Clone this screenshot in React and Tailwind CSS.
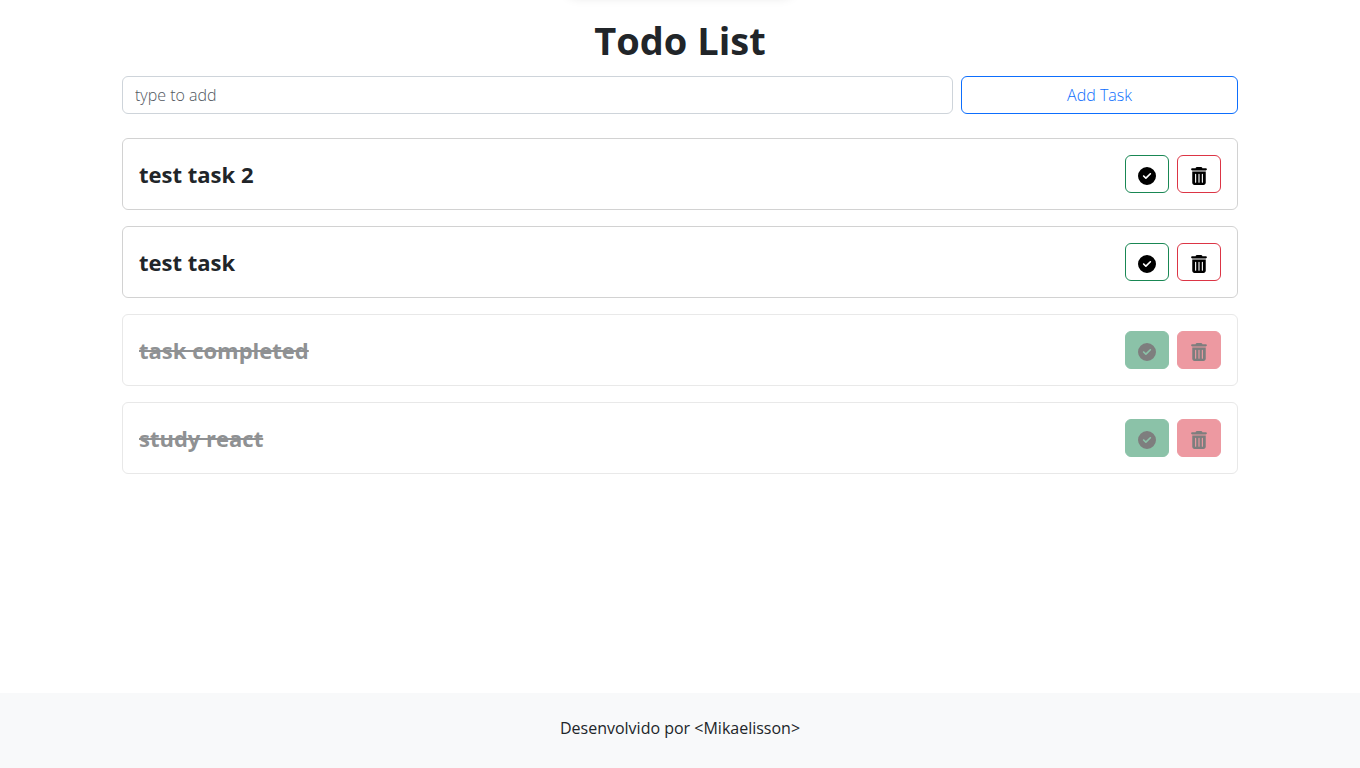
import { useState } from "react";
import { FaCircleCheck, FaTrashCan } from "react-icons/fa6";

const initialTasks = [
  { id: 4, title: "test task 2", done: false },
  { id: 3, title: "test task", done: false },
  { id: 2, title: "task completed", done: true },
  { id: 1, title: "study react", done: true },
];

function TaskCard({ task, onComplete, onDelete }) {
  const base =
    "flex h-[38px] items-center justify-center rounded-md border px-3 pt-1 text-lg text-black";
  return (
    <li
      className={`flex items-center justify-between rounded-md border border-black/[0.175] p-4 ${
        task.done ? "opacity-50" : ""
      }`}
    >
      <h2
        className={`text-[22px]/7 font-bold text-[#212529] ${
          task.done ? "line-through" : ""
        }`}
      >
        {task.title}
      </h2>
      <div className="flex gap-2">
        <button
          type="button"
          aria-label="Complete task"
          disabled={task.done}
          onClick={() => onComplete(task.id)}
          className={`${base} border-[#198754] ${task.done ? "bg-[#198754]" : ""}`}
        >
          <FaCircleCheck />
        </button>
        <button
          type="button"
          aria-label="Delete task"
          disabled={task.done}
          onClick={() => onDelete(task.id)}
          className={`${base} border-[#dc3545] ${task.done ? "bg-[#dc3545]" : ""}`}
        >
          <FaTrashCan />
        </button>
      </div>
    </li>
  );
}

export default function App() {
  const [tasks, setTasks] = useState(initialTasks);
  const [text, setText] = useState("");

  const addTask = (event) => {
    event.preventDefault();
    if (!text.trim()) return;
    setTasks([{ id: Date.now(), title: text.trim(), done: false }, ...tasks]);
    setText("");
  };
  const completeTask = (id) =>
    setTasks(tasks.map((t) => (t.id === id ? { ...t, done: true } : t)));
  const deleteTask = (id) => setTasks(tasks.filter((t) => t.id !== id));

  return (
    <div className="relative flex min-h-screen flex-col overflow-x-hidden bg-white font-['Segoe_UI','Open_Sans',sans-serif] text-base text-[#212529]">
      <div className="absolute inset-x-0 top-0 flex h-4 justify-center overflow-hidden">
        <div className="-mt-12 h-10 w-56 rounded-lg shadow-[0_4px_12px_rgba(0,0,0,0.15)]" />
      </div>
      <main className="mx-auto w-full max-w-[1140px] grow px-3 pt-4">
        <h1 className="text-center text-[38px]/[48px] font-bold">Todo List</h1>
        <form
          onSubmit={addTask}
          className="mt-3 grid grid-cols-[3fr_1fr] gap-2"
        >
          <input
            type="text"
            aria-label="New task"
            placeholder="type to add"
            value={text}
            onChange={(event) => setText(event.target.value)}
            className="h-[38px] min-w-0 rounded-md border border-[#ced4da] px-3 font-light placeholder:text-[#50575e]"
          />
          <button
            type="submit"
            className="h-[38px] rounded-md border border-[#0d6efd] font-light text-[#0d6efd]"
          >
            Add Task
          </button>
        </form>
        <ul className="mt-6 flex flex-col gap-4">
          {tasks.map((task) => (
            <TaskCard
              key={task.id}
              task={task}
              onComplete={completeTask}
              onDelete={deleteTask}
            />
          ))}
        </ul>
      </main>
      <footer className="bg-[#f8f9fa] pt-6 pb-7 text-center font-medium">
        <p className="leading-[23px]">Desenvolvido por &lt;Mikaelisson&gt;</p>
      </footer>
    </div>
  );
}
